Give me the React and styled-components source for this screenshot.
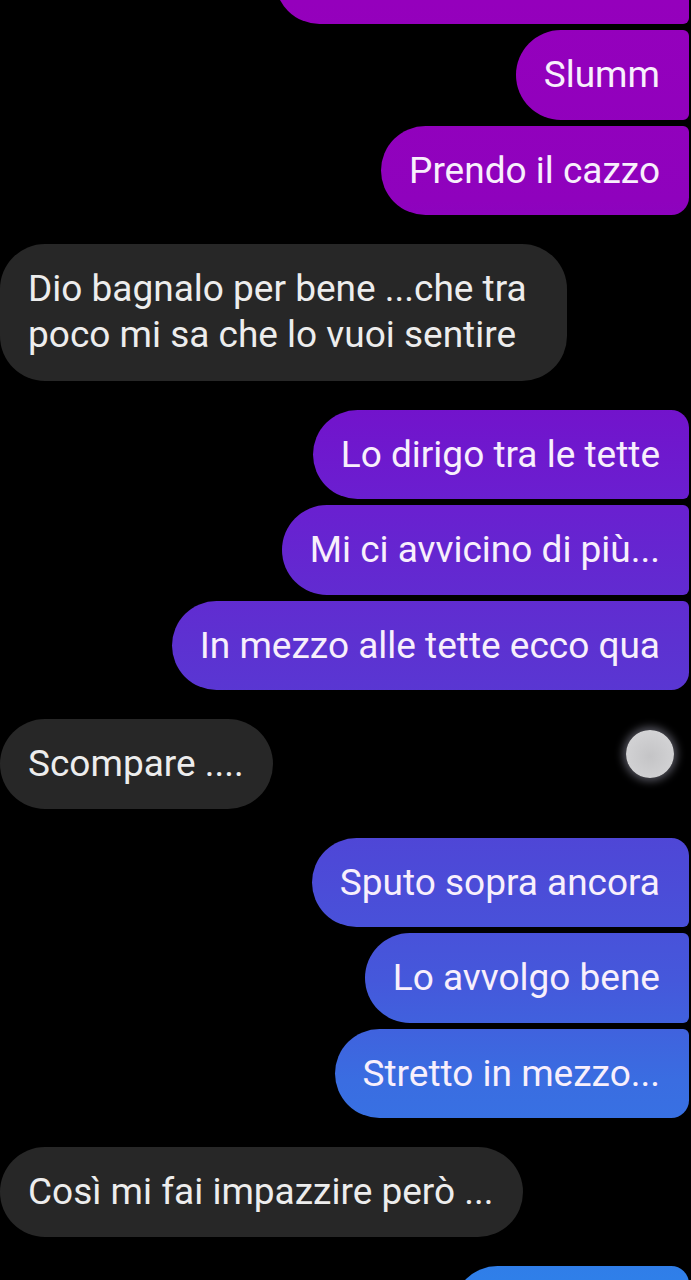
import React from "react";
import styled, { createGlobalStyle, css } from "styled-components";

const messages = [
  { id: 1, side: "out", group: ["", "Slumm", "Prendo il cazzo"] },
  {
    id: 2,
    side: "in",
    group: ["Dio bagnalo per bene ...che tra\npoco mi sa che lo vuoi sentire"],
  },
  {
    id: 3,
    side: "out",
    group: [
      "Lo dirigo tra le tette",
      "Mi ci avvicino di più...",
      "In mezzo alle tette ecco qua",
    ],
  },
  { id: 4, side: "in", group: ["Scompare ...."], seen: true },
  {
    id: 5,
    side: "out",
    group: ["Sputo sopra ancora", "Lo avvolgo bene", "Stretto in mezzo..."],
  },
  { id: 6, side: "in", group: ["Così mi fai impazzire però ..."] },
  { id: 7, side: "out", group: [""], tail: true },
];

const GlobalStyle = createGlobalStyle`
  html, body {
    margin: 0;
    padding: 0;
    background: #000;
  }
  body {
    font-family: Roboto, "Noto Sans", "Liberation Sans", sans-serif;
    -webkit-font-smoothing: antialiased;
  }
`;

const Screen = styled.main`
  width: 691px;
  height: 1280px;
  overflow: hidden;
  background: #000;
`;

const Thread = styled.div`
  display: flex;
  flex-direction: column;
  gap: 29px;
  margin-top: -65.5px;
`;

const Group = styled.div`
  display: flex;
  flex-direction: column;
  gap: 6px;
  align-items: ${(p) => (p.$side === "out" ? "flex-end" : "flex-start")};
`;

const Row = styled.div`
  display: flex;
  align-items: center;
  justify-content: space-between;
  padding-right: 17px;
`;

const outGradient = css`
  background-image: linear-gradient(
    to bottom,
    #9500bc 0px,
    #8f02bd 200px,
    #7312cb 400px,
    #6a1fd0 500px,
    #5d31d1 640px,
    #4d49d7 860px,
    #4558db 980px,
    #3a6de1 1080px,
    #2f7fe9 1280px
  );
  background-attachment: fixed;
  color: #f8effc;
  border-radius: 45px ${(p) => (p.$first ? "18px" : "6px")}
    ${(p) => (p.$last ? "18px" : "6px")} 45px;
  margin-right: 2px;
`;

const inStyle = css`
  background: #272727;
  color: #ededed;
  border-radius: 45px;
`;

const Bubble = styled.div`
  box-sizing: border-box;
  font-size: 37px;
  line-height: 45px;
  padding: 22px 29px 22.5px 28px;
  white-space: pre;
  ${(p) => (p.$side === "out" ? outGradient : inStyle)}
  ${(p) =>
    p.$multi &&
    css`
      line-height: 46px;
      padding-right: 40px;
    `}
  ${(p) =>
    p.$stub &&
    css`
      width: ${p.$stub}px;
      height: 89.5px;
    `}
`;

const SeenDot = styled.div`
  width: 48px;
  height: 48px;
  margin-bottom: 20px;
  border-radius: 50%;
  background: radial-gradient(circle at 50% 55%, #c4c4c6 0%, #d2d2d4 70%, #e8e8ee 100%);
  box-shadow: 0 0 8px 3px rgba(210, 210, 235, 0.4);
`;

const App = () => {
  return (
    <Screen>
      <GlobalStyle />
      <Thread>
        {messages.map((m) => {
          const bubbles = (
            <Group $side={m.side}>
              {m.group.map((text, i) => (
                <Bubble
                  key={i}
                  $side={m.side}
                  $first={i === 0}
                  $last={i === m.group.length - 1}
                  $multi={text.includes("\n")}
                  $stub={text === "" ? (m.tail ? 236 : 414) : 0}
                >
                  {text}
                </Bubble>
              ))}
            </Group>
          );
          if (m.seen) {
            return (
              <Row key={m.id}>
                {bubbles}
                <SeenDot />
              </Row>
            );
          }
          return <React.Fragment key={m.id}>{bubbles}</React.Fragment>;
        })}
      </Thread>
    </Screen>
  );
};

export default App;
